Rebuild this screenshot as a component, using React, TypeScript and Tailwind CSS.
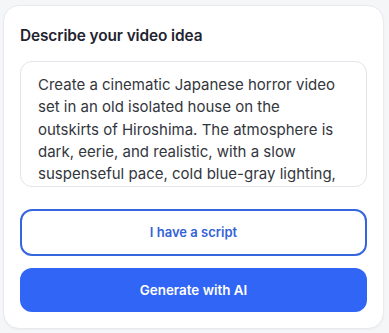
import { useState } from 'react'

const IDEA =
  'Create a cinematic Japanese horror video set in an old isolated house on the outskirts of Hiroshima. The atmosphere is dark, eerie, and realistic, with a slow suspenseful pace, cold blue-gray lighting, creaking floors and long silent shadows.'

export default function App() {
  const [idea, setIdea] = useState(IDEA)

  return (
    <main className="min-h-[333px] bg-[#f5f6f8] pl-[3px] pr-[5px] pt-[5px] pb-[4px] font-['Inter',sans-serif]">
      <section className="rounded-[16px] border border-[#e8eaee] bg-white px-[16px] pt-[21px] pb-[16px] shadow-[0_1px_2px_rgba(0,0,0,0.04)]">
        <h2 className="text-[15.4px] font-semibold leading-[18px] tracking-[-0.1px] text-[#1f2430]">
          Describe your video idea
        </h2>
        <textarea
          value={idea}
          onChange={(e) => setIdea(e.target.value)}
          className="mt-[16px] block h-[126px] w-full resize-none overflow-hidden rounded-[12px] border border-[#e3e5ea] pl-[17px] pr-[22px] pt-[12px] text-[15px] leading-[22.3px] text-[#33363d] outline-none"
        />
        <div className="mt-[22px] flex flex-col gap-[12px]">
          <button
            type="button"
            className="h-[47px] w-full rounded-[12px] border-2 border-[#3566de] bg-white text-[13px] font-semibold text-[#3462d8]"
          >
            I have a script
          </button>
          <button
            type="button"
            className="h-[44px] w-full rounded-[12px] bg-[#3065f6] text-[13.4px] font-semibold text-white"
          >
            Generate with AI
          </button>
        </div>
      </section>
    </main>
  )
}
